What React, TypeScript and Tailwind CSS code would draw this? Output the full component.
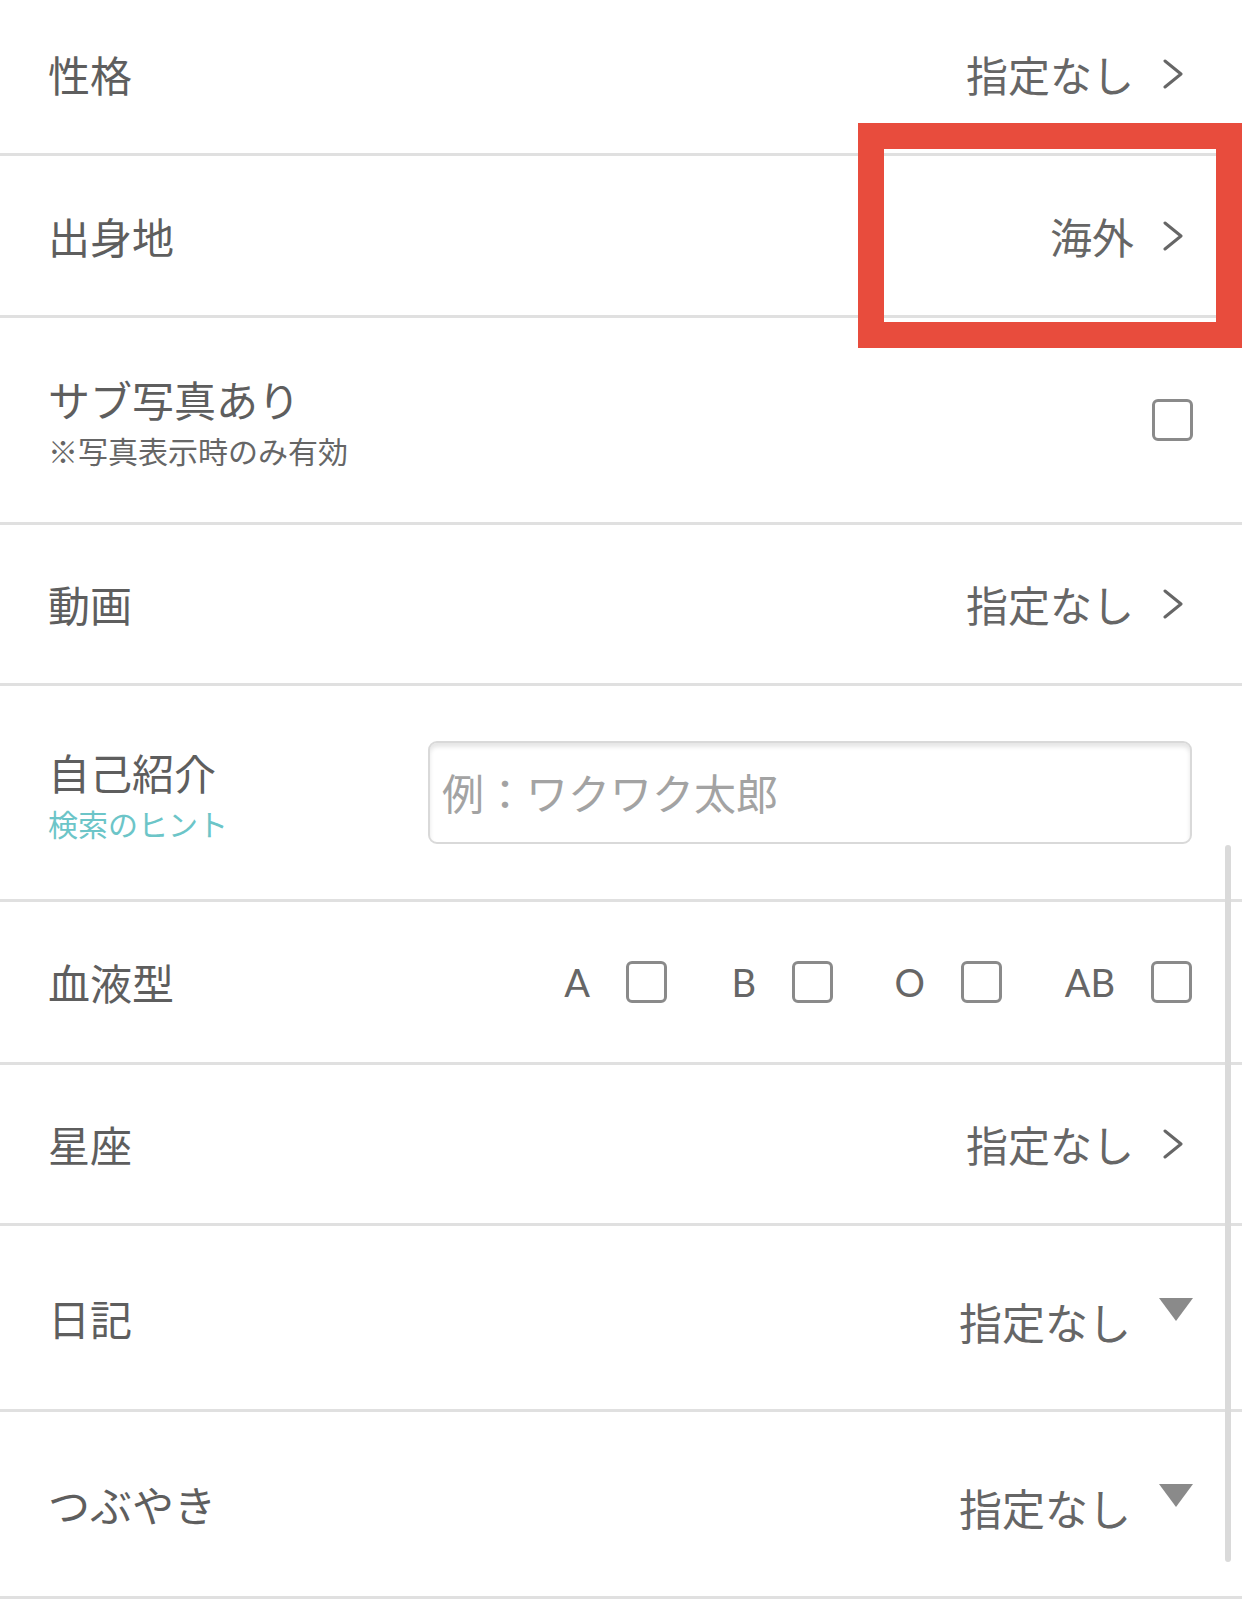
import React from "react";

const font = { fontFamily: '"Noto Sans CJK JP", "Noto Sans", sans-serif' };

function Chevron() {
  return (
    <svg width="22" height="30" viewBox="0 0 22 30" className="shrink-0">
      <polyline points="3,2 19,15 3,28" fill="none" stroke="#666666" strokeWidth="3" strokeLinecap="round" strokeLinejoin="round" />
    </svg>
  );
}

function Box() {
  return <div className="w-[41px] h-[42px] rounded-[6px] border-[3px] border-[#8a8a8a] bg-white shrink-0" />;
}

function LinkRow({ label, value, h }: { label: string; value: string; h: string }) {
  return (
    <div className={`flex items-center justify-between border-b-[3px] border-[#e0e0e0] pl-[48px] pr-[58px] ${h}`}>
      <span className="text-[42px] leading-[50px] text-[#5e5e5e]">{label}</span>
      <div className="flex items-center gap-[28px]">
        <span className="text-[42px] leading-[50px] text-[#666666]">{value}</span>
        <Chevron />
      </div>
    </div>
  );
}

function DropRow({ label, h }: { label: string; h: string }) {
  return (
    <div className={`flex items-center justify-between border-b-[3px] border-[#e0e0e0] pl-[48px] pr-[49px] ${h}`}>
      <span className="text-[42px] leading-[50px] text-[#5e5e5e]">{label}</span>
      <div className="flex items-start gap-[28px] pt-[6px]">
        <span className="text-[43px] leading-[50px] text-[#666666]">指定なし</span>
        <div className="mt-[2px] w-0 h-0 border-l-[17px] border-r-[17px] border-t-[23px] border-l-transparent border-r-transparent border-t-[#8a8a8a]" />
      </div>
    </div>
  );
}

export default function App() {
  return (
    <div className="relative w-[1242px] h-[1603px] bg-white overflow-hidden" style={font}>
      <LinkRow label="性格" value="指定なし" h="h-[156px] pb-[6px]" />
      <LinkRow label="出身地" value="海外" h="h-[162px]" />

      <div className="flex items-center justify-between border-b-[3px] border-[#e0e0e0] pl-[48px] pr-[49px] h-[207px]">
        <div className="flex flex-col pt-[4px]">
          <span className="text-[42px] leading-[50px] text-[#5e5e5e]">サブ写真あり</span>
          <span className="text-[30px] leading-[40px] mt-[6px] text-[#666666]">※写真表示時のみ有効</span>
        </div>
        <Box />
      </div>

      <LinkRow label="動画" value="指定なし" h="h-[161px]" />

      <div className="flex items-center border-b-[3px] border-[#e0e0e0] pl-[48px] pr-[50px] h-[216px]">
        <div className="w-[380px] flex flex-col pt-[4px]">
          <span className="text-[42px] leading-[50px] text-[#5e5e5e]">自己紹介</span>
          <span className="text-[30px] leading-[40px] mt-[6px] text-[#6cc5c8]">検索のヒント</span>
        </div>
        <div className="w-[764px] h-[103px] rounded-[9px] border-2 border-[#d9d9d9] shadow-[inset_0_4px_4px_rgba(0,0,0,0.10)] flex items-center pl-[12px]">
          <span className="text-[42px] leading-[50px] text-[#a3a3a3] -mt-[2px]">例：ワクワク太郎</span>
        </div>
      </div>

      <div className="flex items-center justify-between border-b-[3px] border-[#e0e0e0] pl-[48px] pr-[50px] h-[163px]">
        <span className="text-[42px] leading-[50px] text-[#5e5e5e]">血液型</span>
        <div className="flex items-center text-[38px] leading-[50px] text-[#666666]" style={{ fontFamily: 'Lato, "Noto Sans", sans-serif' }}>
          <span className="w-[50px] text-right">A</span>
          <div className="ml-[36px]"><Box /></div>
          <span className="w-[89px] text-right">B</span>
          <div className="ml-[36px]"><Box /></div>
          <span className="w-[92px] text-right">O</span>
          <div className="ml-[36px]"><Box /></div>
          <span className="w-[113px] text-right">AB</span>
          <div className="ml-[36px]"><Box /></div>
        </div>
      </div>

      <LinkRow label="星座" value="指定なし" h="h-[161px]" />
      <DropRow label="日記" h="h-[186px]" />
      <DropRow label="つぶやき" h="h-[187px]" />

      <div className="absolute left-[1225px] top-[845px] w-[6px] h-[717px] rounded-full bg-[#dadada]" />

      <div className="absolute left-[858px] top-[123px] w-[384px] h-[225px] border-[26px] border-r-0 border-[#e84c3d] box-border">
        <div className="absolute right-0 top-[-26px] bottom-[-26px] w-[26px] bg-[#e84c3d]" />
      </div>
    </div>
  );
}
